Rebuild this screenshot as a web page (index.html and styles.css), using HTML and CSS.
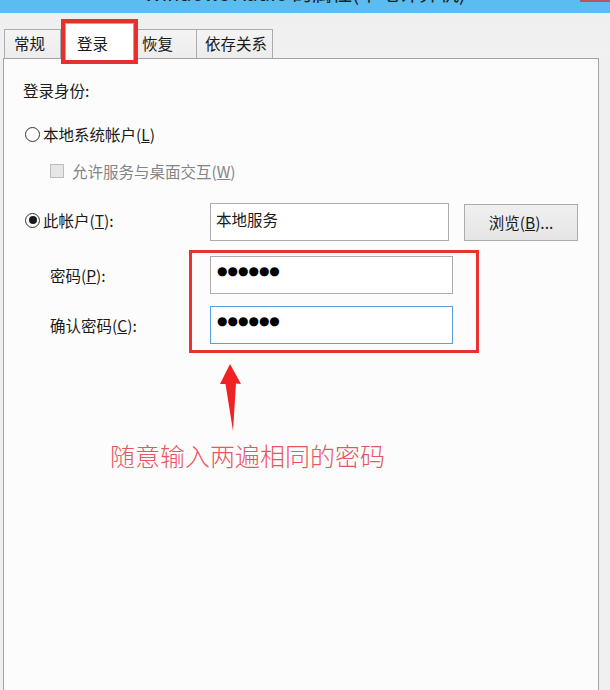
FILE: index.html
```html
<!DOCTYPE html>
<html lang="zh-CN">
<head>
<meta charset="utf-8">
<title>Windows Audio 的属性(本地计算机)</title>
<link rel="stylesheet" href="styles.css">
</head>
<body>
<div class="window">
  <div class="titlebar">
    <div class="title">Windows Audio 的属性(本地计算机)</div>
    <div class="close"></div>
  </div>
  <div class="tabs">
    <div class="tab tab-general">常规</div>
    <div class="tab tab-active">登录</div>
    <div class="tab tab-recovery">恢复</div>
    <div class="tab tab-deps">依存关系</div>
  </div>
  <div class="panel">
    <div class="heading">登录身份:</div>
    <div class="option">
      <span class="radio"></span>
      <span>本地系统帐户(<u>L</u>)</span>
    </div>
    <div class="option option-sub disabled">
      <span class="checkbox"></span>
      <span>允许服务与桌面交互(<u>W</u>)</span>
    </div>
    <div class="form">
      <div class="frow">
        <div class="flabel flabel-radio"><span class="radio checked"></span><span>此帐户(<u>T</u>):</span></div>
        <div class="field field-account">本地服务</div>
        <div class="button">浏览(<u>B</u>)...</div>
      </div>
      <div class="frow frow-pass">
        <div class="flabel flabel-indent">密码(<u>P</u>):</div>
        <div class="field field-pass"><span class="dots">●●●●●●</span></div>
      </div>
      <div class="frow frow-confirm">
        <div class="flabel flabel-indent">确认密码(<u>C</u>):</div>
        <div class="field field-pass focused"><span class="dots">●●●●●●</span></div>
      </div>
    </div>
    <div class="mark"></div>
    <div class="annotation">
      <svg class="arrow" width="22" height="68" viewBox="0 0 22 68">
        <polygon points="10,0 21,20 16,19.5 13,67 5.5,20 0,20" fill="#ef2323"/>
      </svg>
      <div class="note">随意输入两遍相同的密码</div>
    </div>
  </div>
</div>
</body>
</html>
```
FILE: styles.css
```css
html, body {
  margin: 0;
  padding: 0;
  overflow: hidden;
}
body {
  background: #f0f0f0;
  font-family: "Noto Sans CJK SC", "Liberation Sans", sans-serif;
  font-size: 15.5px;
  color: #1a1a1a;
}
.window {
  width: 610px;
  height: 690px;
  overflow: hidden;
}
.titlebar {
  position: relative;
  height: 13px;
  overflow: hidden;
  background: #5bbcef;
}
.title {
  text-align: center;
  font-size: 20px;
  line-height: 24px;
  margin-top: -19px;
  color: #1c1c1c;
  white-space: nowrap;
}
.close {
  position: absolute;
  right: 0;
  top: 0;
  width: 30px;
  height: 2px;
  background: #b8545a;
}
.tabs {
  display: flex;
  align-items: flex-end;
  height: 45px;
  padding-left: 4px;
  box-sizing: border-box;
  background: linear-gradient(#efefef, #f1f1f1);
}
.tab {
  box-sizing: border-box;
  height: 29px;
  border: 1px solid #acacac;
  border-bottom: none;
  background: linear-gradient(#f4f4f4, #ececec);
  line-height: 27px;
  white-space: nowrap;
}
.tab-general {
  width: 57px;
  padding-left: 9px;
}
.tab-active {
  position: relative;
  z-index: 2;
  width: 69px;
  height: 37px;
  margin-left: 4px;
  margin-bottom: -2px;
  padding-left: 11px;
  padding-top: 3px;
  line-height: 33px;
  background: #ffffff;
  outline: 4px solid #e5312d;
}
.tab-recovery {
  width: 63px;
  padding-left: 7px;
}
.tab-deps {
  width: 77px;
  margin-left: -1px;
  padding-left: 8px;
}
.panel {
  position: relative;
  box-sizing: border-box;
  width: 596px;
  height: 640px;
  margin-left: 3px;
  border: 1px solid #a3a3a3;
  background: #fcfcfc;
  padding-left: 21px;
}
.heading {
  margin-top: 21px;
  margin-left: -2px;
  line-height: 20px;
}
.option {
  display: flex;
  align-items: center;
  height: 20px;
  margin-top: 24px;
  gap: 3px;
  line-height: 20px;
}
.option-sub {
  margin-top: 17px;
  padding-left: 25px;
  gap: 8px;
}
.disabled {
  color: #858585;
}
.radio {
  box-sizing: border-box;
  display: inline-flex;
  align-items: center;
  justify-content: center;
  flex: none;
  width: 15px;
  height: 15px;
  border: 1px solid #333333;
  border-radius: 50%;
  background: #ffffff;
}
.radio.checked::after {
  content: "";
  width: 8px;
  height: 8px;
  border-radius: 50%;
  background: #1a1a1a;
}
.checkbox {
  box-sizing: border-box;
  flex: none;
  width: 14px;
  height: 14px;
  border: 1px solid #bcbcbc;
  background: #e6e6e6;
}
.form {
  margin-top: 22px;
}
.frow {
  display: flex;
  align-items: center;
}
.frow-pass {
  margin-top: 15px;
}
.frow-confirm {
  margin-top: 12px;
}
.flabel {
  box-sizing: border-box;
  width: 185px;
  flex: none;
  line-height: 20px;
  white-space: nowrap;
}
.flabel-radio {
  display: flex;
  align-items: center;
  gap: 3px;
  padding-bottom: 4px;
}
.flabel-indent {
  padding-left: 25px;
}
.field {
  box-sizing: border-box;
  height: 38px;
  border: 1px solid #ababab;
  background: #ffffff;
  padding: 5px 6px;
  line-height: 20px;
}
.field-account {
  width: 239px;
  padding-left: 5px;
}
.field-pass {
  width: 243px;
  padding-top: 1px;
}
.field.focused {
  border-color: #5a9fe4;
}
.dots {
  font-family: "DejaVu Sans", sans-serif;
  font-size: 12px;
  letter-spacing: 0px;
  color: #000000;
}
.button {
  box-sizing: border-box;
  width: 114px;
  height: 37px;
  margin-left: 15px;
  border: 1px solid #acacac;
  background: linear-gradient(#f0f0f0, #e5e5e5);
  text-align: center;
  line-height: 35px;
}
.mark {
  position: absolute;
  left: 185px;
  top: 191px;
  width: 290px;
  height: 103px;
  box-sizing: border-box;
  border: 3px solid #e6332f;
}
.annotation {
  margin-top: 20px;
}
.arrow {
  display: block;
  margin-left: 195px;
}
.note {
  margin-top: 8px;
  margin-left: 85px;
  font-size: 25px;
  line-height: 30px;
  font-weight: 300;
  color: #e8555f;
  white-space: nowrap;
}
```
